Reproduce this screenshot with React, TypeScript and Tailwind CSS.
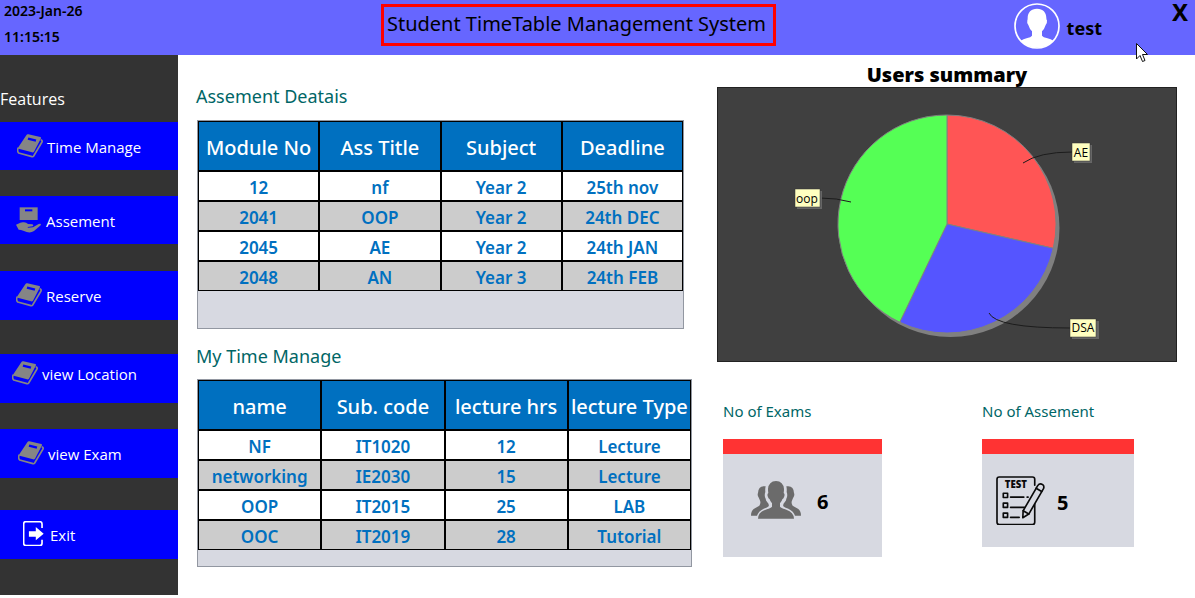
import React from "react";

type IconProps = { className?: string };

function BookIcon({ className }: IconProps) {
  return (
    <svg viewBox="0 0 78 72" className={className} aria-hidden="true">
      <path d="M34 1 L70 9 Q73 10 72 13 L51 53 Q49 56 45 55 L5 44 Q1 42 5 38 L28 4 Q30 0 34 1Z" fill="#858585" />
      <path d="M33 14 L57 20" stroke="#0000ff" strokeWidth="7" fill="none" />
      <path d="M4 41 Q-1 50 5 57 L45 68 Q48 69 50 66 L75 24 Q77 19 71 17" stroke="#858585" strokeWidth="5" fill="none" strokeLinejoin="round" />
    </svg>
  );
}

function HandBoxIcon({ className }: IconProps) {
  return (
    <svg viewBox="0 0 78 78" className={className} aria-hidden="true">
      <path d="M11 1h54v38H11z" fill="#858585" />
      <path d="M27 10h22" stroke="#0000ff" strokeWidth="6" />
      <path d="M0 53 L13 47 Q18 45 24 46 Q31 46 36 51 L49 52 Q54 54 50 58 L35 60 L36 62 L51 61 L68 51 Q77 48 74 55 L54 72 Q44 79 32 75 L22 71 Q15 68 8 68 Z" fill="#858585" />
    </svg>
  );
}

function ExitIcon({ className }: IconProps) {
  return (
    <svg viewBox="0 0 64 78" className={className} aria-hidden="true">
      <path d="M58 21V9Q58 2 51 2H9Q2 2 2 9V68Q2 75 9 75H51Q58 75 58 68V57" stroke="#fff" strokeWidth="5" fill="none" />
      <path d="M18 31H39V18L63 39L39 59V48H18Z" fill="#fff" />
    </svg>
  );
}

function AvatarIcon({ className }: IconProps) {
  return (
    <svg viewBox="0 0 138 138" className={className} aria-hidden="true">
      <circle cx="69" cy="69" r="66" stroke="#fff" strokeWidth="5" fill="none" />
      <path d="M69 17C87 17 97 28 97 45Q97 50 99 52Q100 60 95 66Q91 79 84 85V98Q88 103 98 105Q112 108 118 113Q99 134 69 134Q39 134 20 113Q27 108 40 105Q50 103 54 98V85Q47 79 43 66Q38 60 40 52Q41 50 41 45C41 28 51 17 69 17Z" fill="#fff" />
    </svg>
  );
}

function PeopleIcon({ className }: IconProps) {
  return (
    <svg viewBox="0 0 150 114" className={className} aria-hidden="true">
      <path d="M44 16Q22 12 21 36Q19 40 21 46Q24 52 26 56Q31 66 25 74L8 84Q0 90 0 104H18Q22 91 38 83Q50 80 53 76Q55 70 49 64Q44 58 44 53Q39 44 43 33Q42 24 44 16Z" fill="#6b6b6b" />
      <path d="M106 16Q128 12 129 36Q131 40 129 46Q126 52 124 56Q119 66 125 74L142 84Q150 90 150 104H132Q128 91 112 83Q100 80 97 76Q95 70 101 64Q106 58 106 53Q111 44 107 33Q108 24 106 16Z" fill="#6b6b6b" />
      <path d="M75 0Q97 1 99 24Q99 31 98 36Q102 38 100 46Q98 53 94 55Q92 62 87 67V77Q91 82 106 86Q128 93 129 113H21Q22 93 44 86Q59 82 63 77V67Q58 62 56 55Q52 53 50 46Q48 38 52 36Q51 31 51 24Q53 1 75 0Z" fill="#6b6b6b" />
    </svg>
  );
}

function TestIcon({ className }: IconProps) {
  return (
    <svg viewBox="0 0 148 150" className={className} aria-hidden="true">
      <g stroke="#0a0a0a" strokeWidth="5" fill="none" strokeLinejoin="round" strokeLinecap="round">
        <path d="M117 28V10Q117 3 110 3H10Q3 3 3 10V140Q3 147 10 147H110Q117 147 117 140V84" />
        <path d="M22 52h13v13H22zM22 82h13v13H22zM22 112h13v13H22z" />
        <path d="M44 64H84M94 64H97M44 95H86M44 125H70" />
        <path d="M82 105L126 29Q132 20 141 26Q147 31 143 39L99 115L81 126Z" fill="#d7d9e1" />
        <path d="M82 105L99 115M121 37L138 47" />
      </g>
      <text x="60" y="35" textAnchor="middle" fontSize="29" fontWeight="900" fill="#0a0a0a" className="font-['Noto_Sans']">TEST</text>
    </svg>
  );
}

const features = [
  { label: "Time Manage", Icon: BookIcon, row: "h-12 pl-[17px] gap-1", icon: "w-[26px]" },
  { label: "Assement", Icon: HandBoxIcon, row: "mt-[26px] h-12 pl-4 gap-1", icon: "w-[26px]" },
  { label: "Reserve", Icon: BookIcon, row: "mt-[27px] h-[49px] pl-4 pb-[2px] gap-1", icon: "w-[26px]" },
  { label: "view Location", Icon: BookIcon, row: "mt-[34px] h-[49px] pl-3 pb-3 gap-1", icon: "w-[26px]" },
  { label: "view Exam", Icon: BookIcon, row: "mt-[26px] h-[49px] pl-[18px] pb-[2px] gap-1", icon: "w-[26px]" },
  { label: "Exit", Icon: ExitIcon, row: "mt-8 h-[49px] pl-[23px] pb-[2px] gap-[6px]", icon: "w-[21px]" },
];

const assessments = {
  head: ["Module No", "Ass Title", "Subject", "Deadline"],
  rows: [
    ["12", "nf", "Year 2", "25th nov"],
    ["2041", "OOP", "Year 2", "24th DEC"],
    ["2045", "AE", "Year 2", "24th JAN"],
    ["2048", "AN", "Year 3", "24th FEB"],
  ],
};

const lectures = {
  head: ["name", "Sub. code", "lecture hrs", "lecture Type"],
  rows: [
    ["NF", "IT1020", "12", "Lecture"],
    ["networking", "IE2030", "15", "Lecture"],
    ["OOP", "IT2015", "25", "LAB"],
    ["OOC", "IT2019", "28", "Tutorial"],
  ],
};

function DataTable({ head, rows, className, label }: { head: string[]; rows: string[][]; className: string; label: string }) {
  return (
    <div className={`border border-[#9297a1] bg-[#d7d9e1] ${className}`}>
      <table aria-label={label} className="w-full table-fixed border-separate border-spacing-0 text-center">
        <thead>
          <tr className="h-[50px] bg-[#0070c0] text-xl text-white">
            {head.map((h) => (
              <th key={h} className="whitespace-nowrap border border-black p-0 pt-1 font-medium">{h}</th>
            ))}
          </tr>
        </thead>
        <tbody className="text-[17px] leading-6 text-[#0070c0]">
          {rows.map((r) => (
            <tr key={r[0]} className="h-[30px] bg-white even:bg-[#cccccc]">
              {r.map((c, i) => (
                <td key={i} className="border border-black p-0 pt-1 font-semibold">{c}</td>
              ))}
            </tr>
          ))}
        </tbody>
      </table>
    </div>
  );
}

function PieChart() {
  return (
    <svg viewBox="0 0 460 275" className="block w-full font-['Open_Sans']" role="img" aria-label="Users summary">
      <rect width="460" height="275" fill="#404040" />
      <rect x="0.5" y="0.5" width="459" height="274" fill="none" stroke="#222" />
      <circle cx="233.5" cy="141" r="109" fill="#808080" />
      <g stroke="#808080" strokeWidth="1">
        <path d="M230 137V28A109 109 0 0 1 336.3 161.3Z" fill="#ff5555" />
        <path d="M230 137L336.3 161.3A109 109 0 0 1 182.7 235.2Z" fill="#5555ff" />
        <path d="M230 137L182.7 235.2A109 109 0 0 1 230 28Z" fill="#55ff55" />
      </g>
      <g stroke="#1c1c1c" strokeWidth="1" fill="none">
        <path d="M306 76Q322 65 355 65" />
        <path d="M103 111Q120 111 134 115" />
        <path d="M272 226Q279 241 353 241" />
      </g>
      <g fill="#666">
        <rect x="357" y="58" width="18" height="18" />
        <rect x="80" y="104" width="25" height="18" />
        <rect x="355" y="234" width="27" height="18" />
      </g>
      <g fill="#ffffc0" stroke="#333" strokeWidth="0.5">
        <rect x="355" y="56" width="18" height="18" />
        <rect x="78" y="102" width="25" height="18" />
        <rect x="353" y="232" width="26" height="18" />
      </g>
      <g fontSize="12" fill="#000" textAnchor="middle">
        <text x="364" y="70">AE</text>
        <text x="90" y="116">oop</text>
        <text x="366" y="245">DSA</text>
      </g>
    </svg>
  );
}

function StatCard({ title, value, className, children }: { title: string; value: string; className: string; children: React.ReactNode }) {
  return (
    <section>
      <h3 className="text-[15px] leading-5 text-[#006666]">{title}</h3>
      <div className={`mt-[18px] flex items-center border-t-[15px] border-[#ff3333] bg-[#d7d9e1] ${className}`}>
        {children}
        <span className="pt-1 text-xl font-bold text-black">{value}</span>
      </div>
    </section>
  );
}

export default function App() {
  return (
    <div className="bg-white pb-[3px] font-['Noto_Sans',sans-serif] text-black">
      <header className="relative grid h-[55px] grid-cols-[1fr_auto_1fr_38px] bg-[#6666ff]">
        <div className="pl-1 text-sm font-semibold">
          <p className="mt-px leading-5">2023-Jan-26</p>
          <p className="mt-[6px] leading-5">11:15:15</p>
        </div>
        <h1 className="mt-1 flex h-[42px] items-center whitespace-nowrap border-[3px] border-[#ff0000] pb-[2px] pl-[3px] pr-[7px] text-xl">
          Student TimeTable Management System
        </h1>
        <div className="flex items-start justify-end gap-[7px] pr-[55px]">
          <AvatarIcon className="mt-[3px] w-[46px]" />
          <span className="mt-[14px] text-lg font-bold leading-7">test</span>
        </div>
        <button type="button" aria-label="Close" className="self-start pl-2 text-2xl font-bold leading-6">X</button>
        <svg viewBox="0 0 12 20" className="absolute right-[47px] top-[43px] w-3" aria-hidden="true">
          <path d="M0.5 0.5V16L4 12.5L6.5 18.5L9 17.5L6.5 11.5H11.5Z" fill="#fff" stroke="#111" strokeWidth="1" />
        </svg>
      </header>

      <div className="flex items-stretch">
        <nav className="w-[178px] shrink-0 bg-[#333333] pb-9 pt-8 font-['Open_Sans','Noto_Sans',sans-serif] text-white">
          <h2 className="mb-[11px] text-base leading-6">Features</h2>
          {features.map(({ label, Icon, row, icon }) => (
            <button key={label} type="button" className={`flex w-full items-center bg-[#0000ff] text-left text-[15px] ${row}`}>
              <Icon className={`shrink-0 ${icon}`} />
              <span className="pt-[3px]">{label}</span>
            </button>
          ))}
        </nav>

        <main className="flex flex-1 items-start justify-between px-[18px]">
          <div>
            <h2 className="pt-[29px] text-lg leading-6 text-[#006666]">Assement Deatais</h2>
            <DataTable {...assessments} label="Assement Deatais" className="ml-px mt-3 h-[209px] w-[487px]" />
            <h2 className="mt-[15px] text-lg leading-6 text-[#006666]">My Time Manage</h2>
            <DataTable {...lectures} label="My Time Manage" className="ml-px mt-[11px] h-[188px] w-[495px]" />
          </div>

          <div className="w-[460px]">
            <h2 className="mt-2 text-center font-['Open_Sans'] text-xl font-extrabold leading-6">Users summary</h2>
            <PieChart />
            <div className="mt-[39px] flex justify-between pl-[6px] pr-[43px]">
              <StatCard title="No of Exams" value="6" className="h-[118px] w-[159px] gap-4 pb-[11px] pl-7">
                <PeopleIcon className="w-[50px]" />
              </StatCard>
              <StatCard title="No of Assement" value="5" className="h-[108px] w-[152px] gap-3 pl-[14px]">
                <TestIcon className="w-[49px]" />
              </StatCard>
            </div>
          </div>
        </main>
      </div>
    </div>
  );
}
